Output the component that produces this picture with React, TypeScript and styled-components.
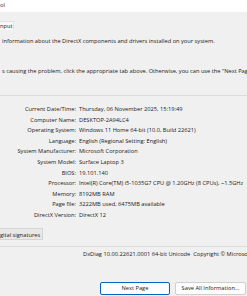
import React from "react";
import styled, { createGlobalStyle } from "styled-components";

const GlobalStyle = createGlobalStyle`
  html, body {
    margin: 0;
    padding: 0;
    background: #f0f0f0;
    overflow: hidden;
  }
  body {
    font-family: "Open Sans", "Liberation Sans", sans-serif;
    color: #1a1a1a;
  }
`;

interface Row {
  label: string;
  value: string;
}

const rows: Row[] = [
  { label: "Current Date/Time:", value: "Thursday, 06 November 2025, 15:19:49" },
  { label: "Computer Name:", value: "DESKTOP-2A94LC4" },
  { label: "Operating System:", value: "Windows 11 Home 64-bit (10.0, Build 22621)" },
  { label: "Language:", value: "English (Regional Setting: English)" },
  { label: "System Manufacturer:", value: "Microsoft Corporation" },
  { label: "System Model:", value: "Surface Laptop 3" },
  { label: "BIOS:", value: "19.101.140" },
  { label: "Processor:", value: "Intel(R) Core(TM) i5-1035G7 CPU @ 1.20GHz (8 CPUs), ~1.5GHz" },
  { label: "Memory:", value: "8192MB RAM" },
  { label: "Page file:", value: "3222MB used, 6475MB available" },
  { label: "DirectX Version:", value: "DirectX 12" },
];

function App() {
  return (
    <>
      <GlobalStyle />
      <Window>
        <TitleBar>ol</TitleBar>
        <TabStrip>
          <Tab>nput</Tab>
        </TabStrip>
        <Intro $top={7}>information about the DirectX components and drivers installed on your system.</Intro>
        <Intro $top={22}>
          s causing the problem, click the appropriate tab above. Otherwise, you can use the "Next Page" button below to visit each page in sequence.
        </Intro>
        <Separator $top={20} />
        <InfoGrid>
          {rows.map((row) => (
            <React.Fragment key={row.label}>
              <Label>{row.label}</Label>
              <Value>{row.value}</Value>
            </React.Fragment>
          ))}
        </InfoGrid>
        <CheckLabel>gital signatures</CheckLabel>
        <Separator $top={6} />
        <Version>DxDiag 10.00.22621.0001 64-bit Unicode&nbsp; Copyright © Microsoft. All rights reserved.</Version>
        <ButtonRow>
          <Button $primary>Next Page</Button>
          <Button>Save All Information...</Button>
        </ButtonRow>
      </Window>
    </>
  );
}

export default App;

const Window = styled.div`
  display: flex;
  flex-direction: column;
  width: 247px;
  height: 296px;
  overflow: hidden;
  font-size: 5.7px;
  white-space: nowrap;
`;

const TitleBar = styled.div`
  height: 12px;
  line-height: 10px;
  background: #ffffff;
  font-size: 6px;
  color: #333;
`;

const TabStrip = styled.div`
  display: flex;
  padding-top: 9px;
`;

const Tab = styled.div`
  width: 14px;
  height: 9px;
  line-height: 9px;
  background: #f9f9f9;
  border: 1px solid #e2e2e2;
  border-left: none;
  border-bottom: none;
  box-sizing: border-box;
`;

const Intro = styled.div<{ $top: number }>`
  margin-top: ${({ $top }) => $top}px;
  padding-left: 2px;
  line-height: 8px;
  overflow: hidden;
`;

const Separator = styled.div<{ $top: number }>`
  margin-top: ${({ $top }) => $top}px;
  height: 1px;
  background: #dcdcdc;
`;

const InfoGrid = styled.div`
  display: grid;
  grid-template-columns: 76px 1fr;
  column-gap: 3px;
  margin-top: 8px;
  line-height: 10.6px;
`;

const Label = styled.div`
  text-align: right;
`;

const Value = styled.div`
  overflow: hidden;
`;

const CheckLabel = styled.div`
  align-self: flex-start;
  margin-top: 7px;
  height: 12px;
  line-height: 12px;
  padding-right: 2px;
  background: #e8e8e8;
  border: 1px solid #d4d4d4;
  border-left: none;
  box-sizing: border-box;
`;

const Version = styled.div`
  margin-top: 3px;
  padding-left: 83px;
  line-height: 8px;
  overflow: hidden;
`;

const ButtonRow = styled.div`
  display: flex;
  gap: 5px;
  margin-top: 24px;
  padding-left: 100px;
`;

const Button = styled.div<{ $primary?: boolean }>`
  width: ${({ $primary }) => ($primary ? 70 : 71)}px;
  height: 13px;
  line-height: 11px;
  text-align: center;
  background: #fdfdfd;
  border: 1px solid ${({ $primary }) => ($primary ? "#0067c0" : "#cfcfcf")};
  border-radius: 2px;
  box-sizing: border-box;
  flex-shrink: 0;
`;
